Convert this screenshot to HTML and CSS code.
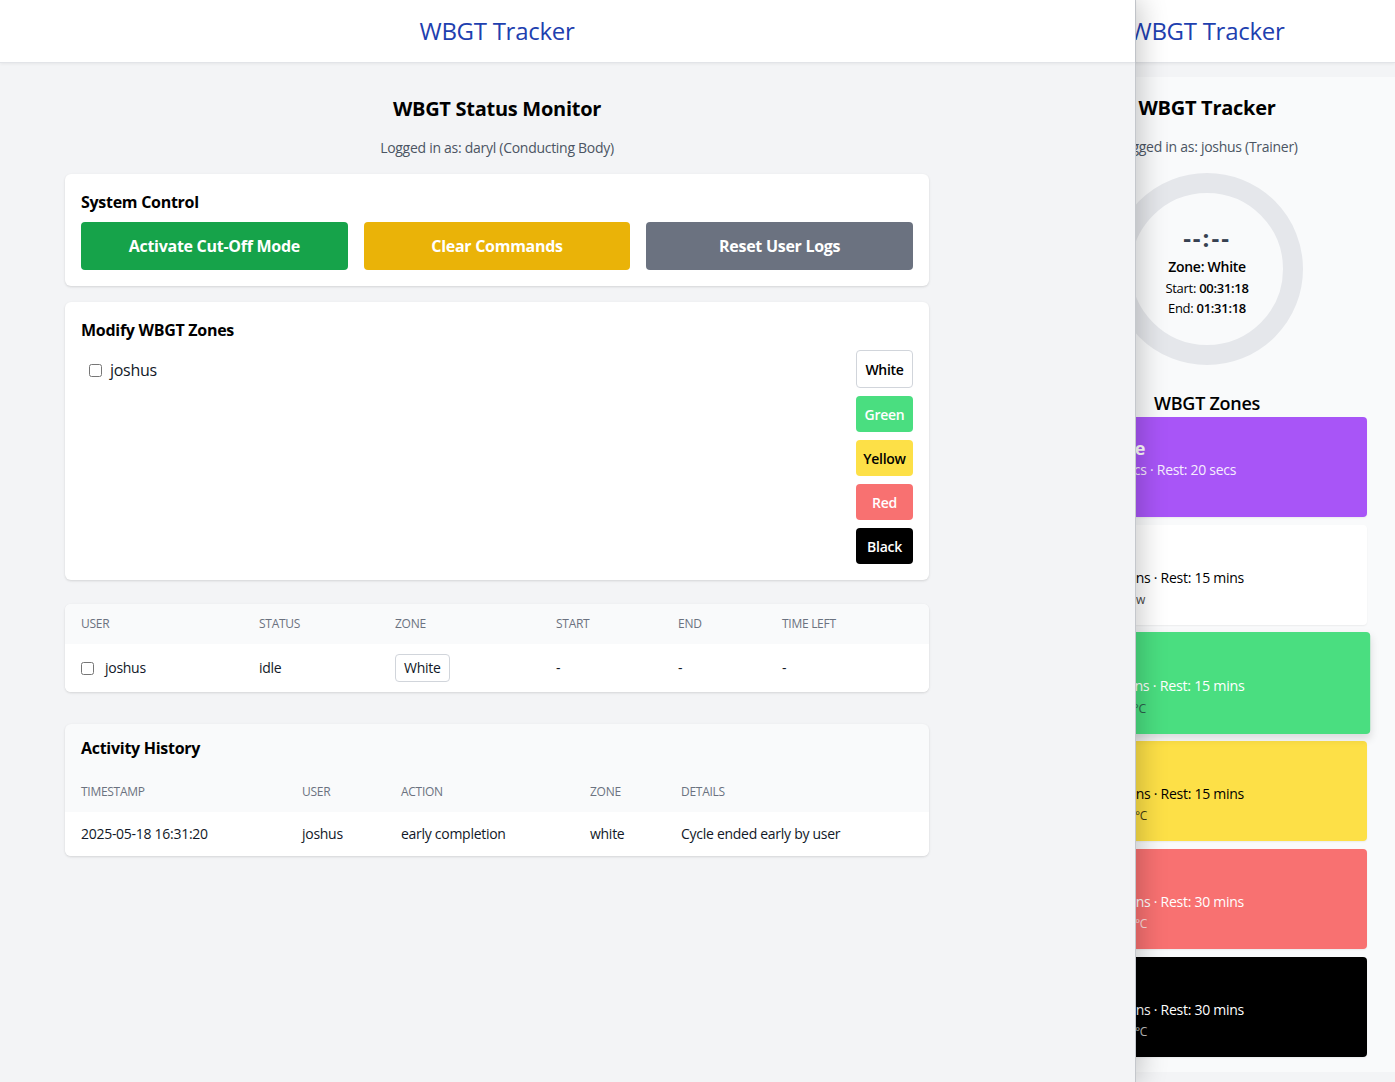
FILE: index.html
```html
<!DOCTYPE html>
<html lang="en">
<head>
<meta charset="utf-8">
<title>WBGT Tracker</title>
<link rel="stylesheet" href="styles.css">
</head>
<body>
<div class="desktop">
  <section class="window main-window">
    <header class="topbar">
      <div class="frame"><h1 class="brand">WBGT Tracker</h1></div>
    </header>
    <main class="frame content">
      <h2 class="page-title">WBGT Status Monitor</h2>
      <p class="subtitle">Logged in as: daryl (Conducting Body)</p>

      <section class="card padded">
        <h3 class="card-title">System Control</h3>
        <div class="control-grid">
          <button class="btn btn-green">Activate Cut-Off Mode</button>
          <button class="btn btn-yellow">Clear Commands</button>
          <button class="btn btn-gray">Reset User Logs</button>
        </div>
      </section>

      <section class="card padded zones-card">
        <h3 class="card-title">Modify WBGT Zones</h3>
        <div class="zones-row">
          <div class="user-list">
            <label class="user-item"><input type="checkbox"><span>joshus</span></label>
          </div>
          <div class="zone-buttons">
            <button class="zbtn z-white">White</button>
            <button class="zbtn z-green">Green</button>
            <button class="zbtn z-yellow">Yellow</button>
            <button class="zbtn z-red">Red</button>
            <button class="zbtn z-black">Black</button>
          </div>
        </div>
      </section>

      <section class="card table-card status-card">
        <table class="data-table status-table">
          <colgroup>
            <col class="c-user"><col class="c-status"><col class="c-zone"><col class="c-start"><col class="c-end"><col class="c-left">
          </colgroup>
          <thead>
            <tr><th>User</th><th>Status</th><th>Zone</th><th>Start</th><th>End</th><th>Time Left</th></tr>
          </thead>
          <tbody>
            <tr>
              <td><label class="row-user"><input type="checkbox"><span>joshus</span></label></td>
              <td>idle</td>
              <td><span class="zone-pill">White</span></td>
              <td>-</td>
              <td>-</td>
              <td>-</td>
            </tr>
          </tbody>
        </table>
      </section>

      <section class="card table-card history-card">
        <h3 class="card-title history-title">Activity History</h3>
        <table class="data-table history-table">
          <colgroup>
            <col class="h-time"><col class="h-user"><col class="h-action"><col class="h-zone"><col class="h-details">
          </colgroup>
          <thead>
            <tr><th>Timestamp</th><th>User</th><th>Action</th><th>Zone</th><th>Details</th></tr>
          </thead>
          <tbody>
            <tr><td>2025-05-18 16:31:20</td><td>joshus</td><td>early completion</td><td>white</td><td>Cycle ended early by user</td></tr>
          </tbody>
        </table>
      </section>
    </main>
  </section>

  <section class="window side-window">
    <header class="topbar side-topbar"><h1 class="brand">WBGT Tracker</h1></header>
    <main class="side-content">
      <h2 class="page-title">WBGT Tracker</h2>
      <p class="subtitle">Logged in as: joshus (Trainer)</p>
      <div class="ring">
        <div class="ring-inner">
          <div class="timer">--:--</div>
          <div class="ring-zone">Zone: White</div>
          <div class="ring-line">Start: <b>00:31:18</b></div>
          <div class="ring-line">End: <b>01:31:18</b></div>
        </div>
      </div>
      <h3 class="zones-heading">WBGT Zones</h3>
      <div class="zone-cards">
        <div class="zcard zc-purple">
          <div class="zc-title">Test Zone</div>
          <div class="zc-sub">Work: 10 secs · Rest: 20 secs</div>
        </div>
        <div class="zcard zc-white">
          <div class="zc-title">White</div>
          <div class="zc-sub">Work: 45 mins · Rest: 15 mins</div>
          <div class="zc-note">Heat stress: low</div>
        </div>
        <div class="zcard zc-green zc-hover">
          <div class="zc-title">Green</div>
          <div class="zc-sub">Work: 45 mins · Rest: 15 mins</div>
          <div class="zc-note note-deg">WBGT ≥ 29.0°C</div>
        </div>
        <div class="zcard zc-yellow">
          <div class="zc-title">Yellow</div>
          <div class="zc-sub">Work: 45 mins · Rest: 15 mins</div>
          <div class="zc-note note-deg">WBGT ≥ 30.0°C</div>
        </div>
        <div class="zcard zc-red">
          <div class="zc-title">Red</div>
          <div class="zc-sub">Work: 30 mins · Rest: 30 mins</div>
          <div class="zc-note note-deg">WBGT ≥ 31.0°C</div>
        </div>
        <div class="zcard zc-black">
          <div class="zc-title">Black</div>
          <div class="zc-sub">Work: 15 mins · Rest: 30 mins</div>
          <div class="zc-note note-deg">WBGT ≥ 32.0°C</div>
        </div>
      </div>
    </main>
  </section>
</div>
</body>
</html>
```

FILE: styles.css
```css
* { box-sizing: border-box; }

html, body {
  margin: 0;
  padding: 0;
  background: #f3f4f6;
}

body {
  font-family: "Open Sans", "Noto Sans", "Liberation Sans", sans-serif;
  color: #111827;
  font-size: 14px;
  letter-spacing: -0.02em;
}

.desktop {
  position: relative;
  width: 1395px;
  height: 1082px;
  overflow: hidden;
  background: #f3f4f6;
}

.window {
  background: #f3f4f6;
  height: 1082px;
}

.main-window {
  position: relative;
  z-index: 2;
  width: 1136px;
  border-right: 1px solid #c4c7cc;
  box-shadow: 4px 0 26px rgba(0, 0, 0, 0.22);
}

.side-window {
  position: absolute;
  z-index: 1;
  left: 1019px;
  top: 0;
  width: 376px;
}

/* header */
.topbar {
  height: 63px;
  background: #ffffff;
  border-bottom: 1px solid #e2e4e8;
  box-shadow: 0 1px 3px rgba(0, 0, 0, 0.06);
}

.frame {
  width: 994px;
  padding: 0 65px;
}

.brand {
  margin: 0;
  text-align: center;
  font-size: 24px;
  line-height: 62px;
  font-weight: 500;
  color: #1e40af;
}

/* main */
.content {
  padding-top: 32px;
}

.page-title {
  margin: 0;
  text-align: center;
  font-size: 20px;
  line-height: 28px;
  font-weight: 700;
  color: #000;
}

.subtitle {
  margin: 15px 0 0;
  text-align: center;
  font-size: 14px;
  line-height: 20px;
  color: #4b5563;
}

.card {
  background: #ffffff;
  border-radius: 6px;
  box-shadow: 0 1px 3px rgba(0, 0, 0, 0.1), 0 1px 2px rgba(0, 0, 0, 0.04);
  margin-top: 16px;
}

.padded {
  padding: 16px;
}

.card-title {
  margin: 0;
  font-size: 16px;
  line-height: 24px;
  font-weight: 700;
  color: #000;
}

.control-grid {
  margin-top: 8px;
  display: grid;
  grid-template-columns: 1fr 1fr 1fr;
  gap: 16px;
}

.btn {
  height: 48px;
  border: 0;
  border-radius: 4px;
  font-family: inherit;
  letter-spacing: inherit;
  font-size: 16px;
  font-weight: 700;
  color: #ffffff;
}

.btn-green { background: #16a34a; }
.btn-yellow { background: #eab308; }
.btn-gray { background: #6b7280; }

/* zones */
.zones-row {
  margin-top: 8px;
  display: flex;
  justify-content: space-between;
  align-items: flex-start;
}

.user-item {
  display: flex;
  align-items: center;
  gap: 8px;
  padding: 8px;
  font-size: 16px;
  line-height: 24px;
  color: #111827;
}

.user-item input, .row-user input {
  margin: 0;
  width: 13px;
  height: 13px;
}

.zone-buttons {
  display: flex;
  flex-direction: column;
  gap: 8px;
  width: 57px;
}

.zbtn {
  height: 36px;
  padding: 0;
  border: 0;
  border-radius: 4px;
  font-family: inherit;
  letter-spacing: inherit;
  font-size: 14px;
  font-weight: 600;
}

.z-white { height: 38px; background: #ffffff; border: 1px solid #d1d5db; color: #000; }
.z-green { background: #4ade80; color: #ffffff; }
.z-yellow { background: #fde047; color: #000; }
.z-red { background: #f87171; color: #ffffff; }
.z-black { background: #000000; color: #ffffff; }

/* tables */
.table-card {
  overflow: hidden;
}

.status-card { margin-top: 24px; }
.history-card { margin-top: 32px; background: #f9fafb; }

.data-table {
  width: 100%;
  border-collapse: collapse;
  table-layout: fixed;
}

.data-table th {
  text-align: left;
  background: #f9fafb;
  padding: 12px 16px;
  font-size: 12px;
  line-height: 16px;
  font-weight: 500;
  color: #6b7280;
  text-transform: uppercase;
}

.data-table td {
  background: #ffffff;
  font-size: 14px;
  line-height: 20px;
  color: #111827;
  padding: 12px 16px;
}

.status-table td { padding: 10px 16px; height: 48px; }

.c-user { width: 178px; }
.c-status { width: 136px; }
.c-zone { width: 161px; }
.c-start { width: 122px; }
.c-end { width: 104px; }

.row-user {
  display: flex;
  align-items: center;
  gap: 11px;
}

.zone-pill {
  display: inline-block;
  padding: 3px 8px;
  border: 1px solid #d1d5db;
  border-radius: 4px;
  background: #fff;
  font-size: 14px;
  line-height: 20px;
}

.history-title {
  padding: 12px 16px;
}

.h-time { width: 221px; }
.h-user { width: 99px; }
.h-action { width: 189px; }
.h-zone { width: 91px; }

/* side window */
.side-content {
  margin-top: 14px;
  background: #f9fafb;
  height: 995px;
  padding-top: 17px;
  display: flex;
  flex-direction: column;
  align-items: center;
}

.ring {
  margin-top: 16px;
  width: 192px;
  height: 192px;
  border-radius: 50%;
  border: 20px solid #e5e7eb;
  display: flex;
  align-items: center;
  justify-content: center;
}

.ring-inner {
  display: flex;
  flex-direction: column;
  align-items: center;
  padding-top: 1px;
}

.timer {
  font-size: 24px;
  line-height: 32px;
  font-weight: 700;
  color: #374151;
  letter-spacing: 2px;
}

.ring-zone {
  margin-top: 2px;
  font-size: 14px;
  line-height: 22px;
  font-weight: 600;
  color: #000;
}

.ring-line {
  font-size: 13px;
  line-height: 20px;
  color: #000;
}

.ring-line:first-of-type { margin-top: 2px; }
.ring-line b { font-weight: 600; }

.zones-heading {
  margin: 26px 0 0;
  font-size: 18px;
  line-height: 24px;
  font-weight: 600;
  color: #000;
}

.zone-cards {
  margin-top: 2px;
  width: 320px;
  display: flex;
  flex-direction: column;
  gap: 8px;
}

.zcard {
  height: 100px;
  border-radius: 4px;
  padding: 19px 14px 0;
  box-shadow: 0 1px 2px rgba(0, 0, 0, 0.06);
}

.zc-title {
  font-size: 18px;
  line-height: 24px;
  font-weight: 700;
}

.zc-sub {
  font-size: 14px;
  line-height: 20px;
}

.zc-note {
  margin-top: 2px;
  font-size: 12px;
  line-height: 20px;
  opacity: 0.75;
}

.note-deg {
  padding-left: 6px;
}

.zc-purple { background: #a855f7; color: #fff; }
.zc-purple .zc-sub { opacity: 0.9; }
.zc-white { background: #fff; color: #000; }
.zc-green { background: #4ade80; color: #fff; }
.zc-green .zc-note { color: #1f2937; opacity: 0.7; }
.zc-yellow { background: #fde047; color: #000; }
.zc-red { background: #f87171; color: #fff; }
.zc-black { background: #000; color: #fff; }

.zc-hover {
  transform: scale(1.02);
  box-shadow: 0 4px 8px rgba(0, 0, 0, 0.12);
}
```
